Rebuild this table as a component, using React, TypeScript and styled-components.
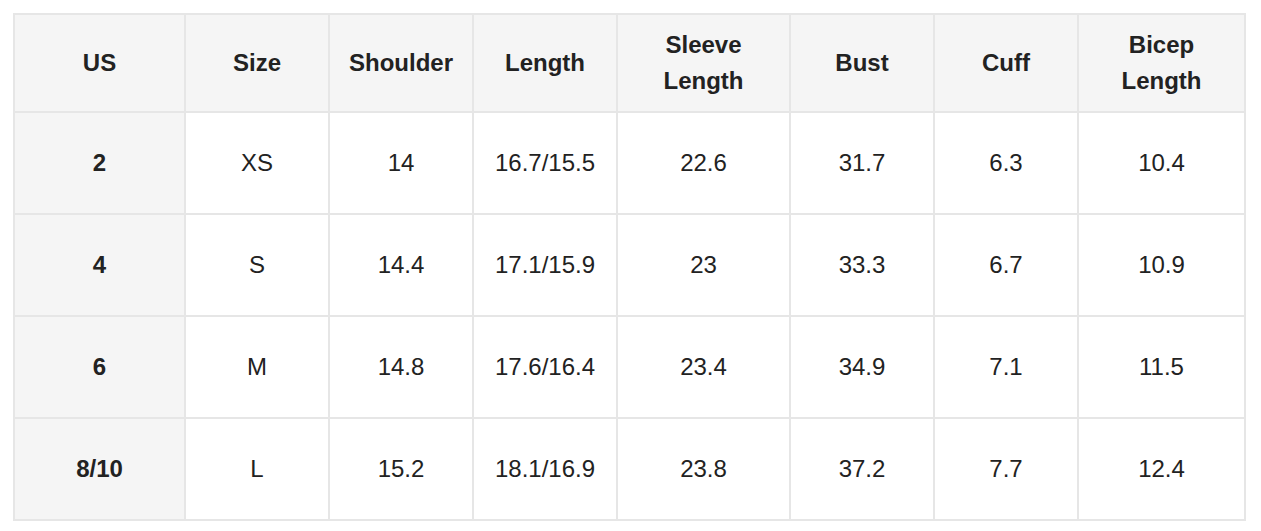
import React from "react";
import styled, {createGlobalStyle} from "styled-components";

const GlobalStyle = createGlobalStyle`
  html, body {
    margin: 0;
    padding: 0;
    background: #fff;
  }
`

const headers = ["US", "Size", "Shoulder", "Length", "Sleeve Length", "Bust", "Cuff", "Bicep Length"];

const rows = [
    ["2", "XS", "14", "16.7/15.5", "22.6", "31.7", "6.3", "10.4"],
    ["4", "S", "14.4", "17.1/15.9", "23", "33.3", "6.7", "10.9"],
    ["6", "M", "14.8", "17.6/16.4", "23.4", "34.9", "7.1", "11.5"],
    ["8/10", "L", "15.2", "18.1/16.9", "23.8", "37.2", "7.7", "12.4"],
];

const App: React.FC = () => {
    return (
        <>
            <GlobalStyle/>
            <Page>
                <SizeTable>
                    {headers.map((h) => (
                        <HeadCell key={h}>
                            <Label>{h}</Label>
                        </HeadCell>
                    ))}
                    {rows.map((row) =>
                        row.map((value, i) => (
                            <Cell key={row[0] + "-" + i} $first={i === 0}>
                                {value}
                            </Cell>
                        ))
                    )}
                </SizeTable>
            </Page>
        </>
    );
}

const Page = styled.div`
  padding: 13px 15px 10px 13px;
  font-family: "Liberation Sans", Arial, Helvetica, sans-serif;
  color: #222;
`

const SizeTable = styled.div`
  display: grid;
  grid-template-columns: 171px 144px 144px 144px 173px 144px 144px 167px;
  grid-template-rows: 98px repeat(4, 102px);
  width: max-content;
  border-top: 2px solid #e6e6e6;
  border-left: 2px solid #e6e6e6;
`

const CellBase = styled.div`
  box-sizing: border-box;
  display: flex;
  align-items: center;
  justify-content: center;
  text-align: center;
  border-right: 2px solid #e6e6e6;
  border-bottom: 2px solid #e6e6e6;
  font-size: 24px;
  line-height: 36px;
`

const HeadCell = styled(CellBase)`
  background: #f5f5f5;
  font-weight: 700;
`

const Label = styled.span`
  display: block;
  max-width: 110px;
`

const Cell = styled(CellBase)<{ $first?: boolean }>`
  background: ${(p) => (p.$first ? "#f5f5f5" : "#fff")};
  font-weight: ${(p) => (p.$first ? 700 : 400)};
`

export default App;
